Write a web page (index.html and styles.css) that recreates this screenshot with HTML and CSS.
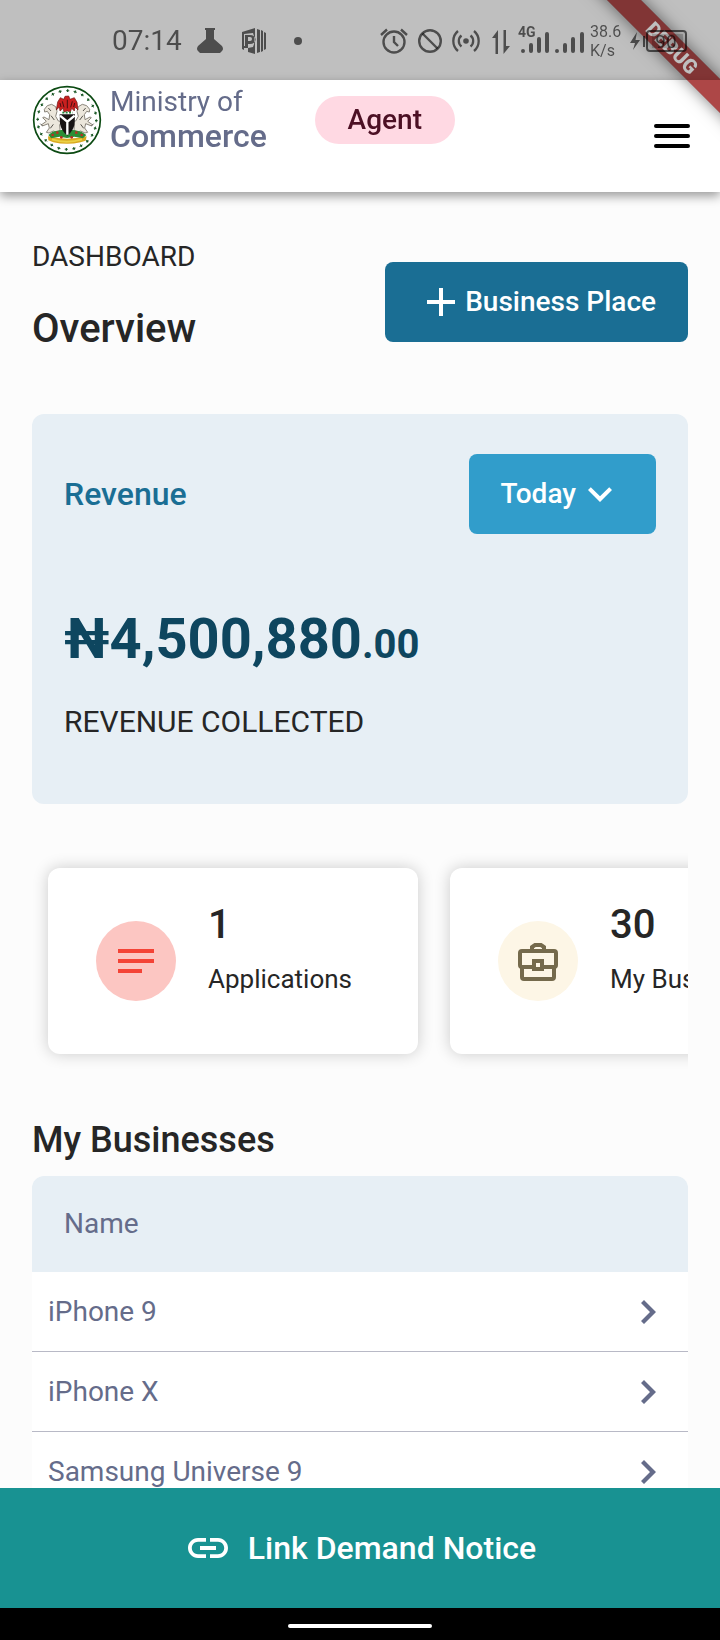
FILE: index.html
```html
<!DOCTYPE html>
<html lang="en">
<head>
<meta charset="utf-8">
<meta name="viewport" content="width=device-width, initial-scale=1">
<title>Ministry of Commerce – Dashboard</title>
<link rel="stylesheet" href="styles.css">
</head>
<body>
<div class="debug" aria-hidden="true"><span class="debug-band">DEBUG</span></div>

<div class="status">
  <span class="status-time">07:14</span>
  <svg class="status-icon" viewBox="0 0 28 28" aria-hidden="true"><path d="M9 1h10v2h-1v9l8 7q2 3 0 5l-2 2H4l-2-2q-2-2 0-5l8-7V3H9z"/></svg>
  <svg class="status-icon status-app" viewBox="0 0 28 28" aria-hidden="true"><path fill-rule="evenodd" d="M2 5L15 1v26L8 25v-4H4v2L2 22zM4 7v12h1V8h5a5 4 0 0 1 0 9H8v4l5-1q3-7 0-14zM8 10v4h2a2 2 0 0 0 0-4z"/><path d="M17 2l3 1v22l-3 1zM21 3l2 1v20l-2 1zM24 5l2 1v16l-2 1z"/></svg>
  <svg class="status-icon status-dot" viewBox="0 0 28 28" aria-hidden="true"><circle cx="14" cy="14" r="4"/></svg>

  <div class="status-right">
    <div class="status-icons">
      <svg class="status-icon" viewBox="0 0 28 28" aria-hidden="true"><g fill="none" stroke="currentColor" stroke-width="2.400"><circle cx="14" cy="15" r="10.500"/><path d="M14 9v6l4 4M1 8l6-5.500M27 8l-6-5.500"/></g></svg>
      <svg class="status-icon" viewBox="0 0 28 28" aria-hidden="true"><g fill="none" stroke="currentColor" stroke-width="2.400"><circle cx="14" cy="14" r="10.800"/><path d="M6.500 6.500l15 15"/></g></svg>
      <svg class="status-icon" viewBox="0 0 28 28" aria-hidden="true"><circle cx="14" cy="14" r="2.800"/><g fill="none" stroke="currentColor" stroke-width="2.300"><path d="M9.500 8.500a7 7 0 0 0 0 11M18.500 8.500a7 7 0 0 1 0 11M6 4a13 13 0 0 0 0 20M22 4a13 13 0 0 1 0 20"/></g></svg>
      <svg class="status-icon" viewBox="0 0 28 28" aria-hidden="true"><path d="M10 3v24H7.500V11H4zM15.500 3H18v16h4l-6.500 8z"/></svg>
    </div>
    <div class="status-signal">
      <svg viewBox="0 0 36 36" aria-hidden="true"><text class="signal-tag" x="0" y="14">4G</text><g stroke="currentColor" stroke-width="4" stroke-linecap="round"><path d="M5 27.900v.1M13 22v6M21 16v12M29 11v17"/></g></svg>
      <svg viewBox="0 0 36 36" aria-hidden="true"><g stroke="currentColor" stroke-width="4" stroke-linecap="round"><path d="M3 27.900v.1M11 22v6M19 16v12M28 11v17"/></g></svg>
    </div>
    <span class="status-speed">38.6<br>K/s</span>
    <svg class="status-battery" viewBox="0 0 60 28" aria-hidden="true"><path d="M9 5L2 16h5L5 23l7-10H7.500zM15 9h2v11h-2z"/><rect x="19" y="4" width="39" height="20" rx="3" fill="none" stroke="currentColor" stroke-width="2"/><rect x="24" y="7" width="31" height="14" opacity=".3"/><text class="battery-level" x="38" y="21" text-anchor="middle">90</text></svg>
  </div>
</div>

<header class="header">
  <div class="brand">
    <svg class="crest" viewBox="0 0 210 210" role="img" aria-label="Coat of arms">
      <circle cx="105" cy="105" r="100" fill="#fff" stroke="#0b4a12" stroke-width="5"/>
      <circle cx="105" cy="105" r="88" fill="none" stroke="#1d5a28" stroke-width="8" stroke-dasharray="4 19"/>
      <circle cx="105" cy="105" r="88" fill="none" stroke="#1d5a28" stroke-width="3" stroke-dasharray="10 13" stroke-dashoffset="3"/>
      <g fill="#ece7dc" stroke="#8b867c" stroke-width="3">
        <path id="horse" d="M78 143l-14-5-13 6-8-2 9-13-3-13-18 7-2-4 14-10-11-11 4-2 15 8 2-15-7-10-8 2-1-8 9-11 13-4 12 7 4 14-4 15 8 14 13 2-9 9 1 14z"/>
        <use href="#horse" transform="translate(210 0) scale(-1 1)"/>
      </g>
      <g fill="none" stroke="#55524c" stroke-width="3"><path d="M49 69l8 9M57 92l10 13M31 122l-6-6M55 130l9-12M161 69l-8 9M153 92l-10 13M179 122l6-6M155 130l-9-12"/></g>
      <path fill="#d9a91f" d="M48 154q57 14 116 0l-3 13-15 5q-40 9-82 0l-15-6z"/>
      <path fill="#2c8e35" d="M49 150l13-10 20-4 23-3 24 3 19 4 15 10-10 10-26-5-22 4-22-4-25 5z"/>
      <path fill="none" stroke="#ead044" stroke-width="6" d="M60 163q44 14 90 0"/>
      <g fill="#bd2d22"><circle cx="62" cy="150" r="4"/><circle cx="76" cy="143" r="4"/><circle cx="88" cy="157" r="4"/><circle cx="119" cy="157" r="4"/><circle cx="133" cy="143" r="4"/><circle cx="149" cy="150" r="4"/></g>
      <path fill="#181414" d="M83 88h46l-1 28q-4 22-22 36-18-14-22-36z"/>
      <path fill="none" stroke="#fff" stroke-width="7" d="M84 92l22 18 22-18M106 109v40"/>
      <path fill="#c9201f" stroke="#6d1512" stroke-width="2" d="M99 34l11-1 4 10 13-5 8 14 3 23-9-9-2 12-8-8-4 11-9-3-10 3-3-11-9 8-2-12-9 9 4-24 8-13 10 5z"/>
      <path fill="none" stroke="#4a1010" stroke-width="3" d="M91 49l5 18M121 49l-5 18M106 44v26M84 54l3 12M128 54l-3 12"/>
      <path fill="none" stroke="#22883a" stroke-width="5" stroke-dasharray="6 4" d="M91 83h31"/>
    </svg>
    <div class="brand-name"><span class="brand-top">Ministry of</span><strong class="brand-main">Commerce</strong></div>
    <span class="role">Agent</span>
  </div>
  <button class="menu" type="button" aria-label="Menu"><svg class="icon" viewBox="0 0 48 48" aria-hidden="true"><path stroke="currentColor" stroke-width="4" stroke-linecap="round" d="M8 14h32M8 24h32M8 34h32"/></svg></button>
</header>

<main class="main">
  <section class="intro">
    <div class="intro-titles"><p class="eyebrow">DASHBOARD</p><h1 class="page-title">Overview</h1></div>
    <button class="btn btn-primary" type="button"><svg class="icon" viewBox="0 0 48 48" aria-hidden="true"><path d="M22 10h4v12h12v4H26v12h-4V26H10v-4h12z"/></svg>Business Place</button>
  </section>

  <section class="revenue">
    <div class="revenue-head">
      <h2 class="revenue-title">Revenue</h2>
      <button class="btn btn-light" type="button" aria-haspopup="listbox">Today<svg class="icon" viewBox="0 0 48 48" aria-hidden="true"><path d="M33.200 17.200L24 26.300l-9.200-9.100L12 20l12 12 12-12z"/></svg></button>
    </div>
    <p class="amount">₦4,500,880<span class="amount-minor">.00</span></p>
    <p class="revenue-note">REVENUE COLLECTED</p>
  </section>

  <section class="stats" aria-label="Statistics">
    <article class="stat">
      <span class="stat-badge stat-badge-red"><svg class="icon" viewBox="0 0 48 48" aria-hidden="true"><path d="M6 12h36v4H6zM6 22h36v4H6zM6 32h24v4H6z"/></svg></span>
      <div class="stat-text"><strong class="stat-value">1</strong><span class="stat-label">Applications</span></div>
    </article>
    <article class="stat">
      <span class="stat-badge stat-badge-sand"><svg class="icon" viewBox="0 0 48 48" aria-hidden="true"><g fill="none" stroke="currentColor" stroke-width="4"><path d="M18 14v-4l3-2h6l3 2v4M20 30H8q-2 0-2-2V16q0-2 2-2h32q2 0 2 2v12q0 2-2 2H28M8 30v10q0 2 2 2h28q2 0 2-2V30"/><path d="M20 24h8v8h-8z"/></g></svg></span>
      <div class="stat-text"><strong class="stat-value">30</strong><span class="stat-label">My Businesses</span></div>
    </article>
  </section>

  <section class="businesses">
    <h2 class="section-title">My Businesses</h2>
    <table class="table">
      <thead><tr><th colspan="2" scope="col">Name</th></tr></thead>
      <tbody>
        <tr><td>iPhone 9</td><td class="cell-go"><button class="go" type="button" aria-label="Open iPhone 9"><svg class="icon" viewBox="0 0 48 48" aria-hidden="true"><path d="M20 12l-3 3 9 9-9 9 3 3 12-12z"/></svg></button></td></tr>
        <tr><td>iPhone X</td><td class="cell-go"><button class="go" type="button" aria-label="Open iPhone X"><svg class="icon" viewBox="0 0 48 48" aria-hidden="true"><path d="M20 12l-3 3 9 9-9 9 3 3 12-12z"/></svg></button></td></tr>
        <tr><td>Samsung Universe 9</td><td class="cell-go"><button class="go" type="button" aria-label="Open Samsung Universe 9"><svg class="icon" viewBox="0 0 48 48" aria-hidden="true"><path d="M20 12l-3 3 9 9-9 9 3 3 12-12z"/></svg></button></td></tr>
      </tbody>
    </table>
  </section>
</main>

<button class="link-bar" type="button"><svg class="icon" viewBox="0 0 24 24" aria-hidden="true"><path d="M3.900 12c0-1.710 1.390-3.100 3.100-3.100h4V7H7c-2.760 0-5 2.240-5 5s2.240 5 5 5h4v-1.900H7c-1.710 0-3.100-1.390-3.100-3.100zM8 13h8v-2H8v2zm9-6h-4v1.900h4c1.710 0 3.100 1.390 3.100 3.100s-1.390 3.100-3.100 3.100h-4V17h4c2.760 0 5-2.240 5-5s-2.240-5-5-5z"/></svg>Link Demand Notice</button>
<div class="home-bar"><span class="home-handle"></span></div>
</body>
</html>
```
FILE: styles.css
```css
* {
  box-sizing: border-box;
}

body {
  position: relative;
  display: flex;
  flex-direction: column;
  height: 100vh;
  margin: 0;
  overflow: hidden;
  background: #fff;
  color: #262626;
  font-family: Roboto, "Liberation Sans", sans-serif;
  font-size: 28px;
  line-height: 32px;
}

h1, h2, p {
  margin: 0;
}

button {
  padding: 0;
  border: 0;
  background: none;
  color: inherit;
  font: inherit;
  cursor: pointer;
}

svg {
  display: block;
  flex: none;
  fill: currentColor;
}

.icon {
  width: 48px;
  height: 48px;
}

/* Corner ribbon, laid over the page but under the system bar */
.debug {
  position: absolute;
  top: 0;
  right: 0;
  z-index: 3;
  width: 160px;
  height: 160px;
  overflow: hidden;
  pointer-events: none;
}

.debug-band {
  position: absolute;
  top: 36px;
  right: -72px;
  width: 240px;
  height: 24px;
  background: rgba(145, 10, 10, 0.75);
  box-shadow: 0 0 16px rgba(0, 0, 0, 0.5);
  color: #fff;
  font-size: 20px;
  font-weight: 900;
  line-height: 24px;
  text-align: center;
  transform: rotate(45deg);
}

/* System status bar */
.status {
  position: relative;
  z-index: 4;
  display: flex;
  flex: none;
  align-items: center;
  height: 80px;
  padding: 2px 32px 0 112px;
  background: rgba(0, 0, 0, 0.25);
  color: rgba(0, 0, 0, 0.6);
}

.status-time {
  margin-right: 14px;
}

.status-icon {
  width: 28px;
  height: 28px;
}

.status-app {
  margin-left: 16px;
}

.status-dot {
  margin-left: 16px;
}

.status-right {
  display: flex;
  align-items: center;
  margin-left: auto;
}

.status-icons {
  display: flex;
  gap: 8px;
  padding-right: 2px;
}

.status-signal {
  display: flex;
}

.status-signal svg {
  width: 36px;
  height: 36px;
}

.signal-tag {
  font-size: 14px;
  font-weight: 700;
}

.status-speed {
  width: 38px;
  font-size: 16px;
  line-height: 19px;
  white-space: nowrap;
}

.status-battery {
  width: 60px;
  height: 28px;
}

.battery-level {
  font-size: 19px;
}

/* App header */
.header {
  position: relative;
  z-index: 2;
  display: flex;
  flex: none;
  justify-content: space-between;
  min-height: 112px;
  padding: 5px 24px 5px 32px;
  background: #fff;
  box-shadow: 0 4px 10px rgba(0, 0, 0, 0.4);
}

.brand {
  display: flex;
  align-items: center;
  align-self: flex-start;
}

.crest {
  width: 70px;
  height: 70px;
  margin-right: 8px;
}

.brand-name {
  display: flex;
  flex-direction: column;
  color: #656c8a;
}

.brand-main {
  font-size: 32px;
  font-weight: 500;
  line-height: 36px;
}

.role {
  min-width: 140px;
  margin-left: 48px;
  padding: 8px 32px;
  border-radius: 24px;
  background: #ffd9e3;
  color: #4c1024;
  font-weight: 500;
  text-align: center;
}

.menu {
  align-self: center;
  color: #000;
}

/* Scrolling content */
.main {
  flex: 1;
  min-height: 0;
  padding: 49px 32px 0;
  overflow-y: auto;
  scrollbar-width: none;
  background: #fcfcfc;
}

.intro {
  display: flex;
  align-items: center;
  justify-content: space-between;
}

.page-title {
  margin-top: 32px;
  font-size: 40px;
  font-weight: 500;
  line-height: 48px;
}

.btn {
  display: flex;
  align-items: center;
  min-height: 80px;
  padding: 0 32px;
  border-radius: 8px;
  color: #fff;
  font-weight: 500;
}

.btn-primary {
  margin-top: 10px;
  background: #1a6e94;
}

.btn-light {
  background: #319dcb;
}

.revenue {
  margin-top: 61px;
  padding: 40px 32px 64px;
  border-radius: 12px;
  background: #e7eff5;
}

.revenue-head {
  display: flex;
  align-items: center;
  justify-content: space-between;
}

.revenue-title {
  color: #1a6e94;
  font-size: 32px;
  font-weight: 500;
}

.amount {
  margin-top: 73px;
  color: #0e465f;
  font-size: 56px;
  font-weight: 700;
  line-height: 64px;
}

.amount-minor {
  font-size: 40px;
}

.revenue-note {
  margin-top: 27px;
  font-size: 30px;
  line-height: 36px;
}

.stats {
  display: flex;
  gap: 32px;
  margin-top: 32px;
  padding: 32px 16px;
  overflow-x: auto;
  scrollbar-width: none;
}

.stat {
  display: flex;
  flex: 0 0 370px;
  gap: 32px;
  align-items: center;
  min-height: 186px;
  padding: 32px 48px;
  border-radius: 12px;
  background: #fff;
  box-shadow: 0 0 16px rgba(0, 0, 0, 0.2);
}

.stat-badge {
  display: grid;
  flex: none;
  place-items: center;
  width: 80px;
  height: 80px;
  border-radius: 50%;
}

.stat-badge-red {
  background: #fcc6c2;
  color: #f44336;
}

.stat-badge-sand {
  background: #fdf6e6;
  color: #756a4c;
}

.stat-text {
  display: flex;
  flex-direction: column;
  gap: 14px;
  margin-bottom: 26px;
  white-space: nowrap;
}

.stat-value {
  font-size: 40px;
  font-weight: 500;
  line-height: 48px;
}

.stat-label {
  font-size: 26px;
}

.section-title {
  margin: 32px 0 14px;
  font-size: 36px;
  font-weight: 500;
  line-height: 44px;
}

.table {
  width: 100%;
  border-collapse: separate;
  border-spacing: 0;
  background: #fff;
  border-radius: 12px 12px 0 0;
  color: #656c8a;
  text-align: left;
}

.table th {
  height: 96px;
  padding: 0 32px;
  border-radius: 12px 12px 0 0;
  background: #e7eff5;
  font-weight: 400;
}

.table td {
  height: 80px;
  padding: 0 16px;
  border-bottom: 1px solid #b8b9c6;
}

.cell-go {
  width: 80px;
}

.go {
  display: block;
}

/* Bottom action and system navigation */
.link-bar {
  display: flex;
  flex: none;
  gap: 16px;
  align-items: center;
  justify-content: center;
  min-height: 120px;
  background: #189292;
  color: #fff;
  font-size: 32px;
  font-weight: 500;
}

.home-bar {
  display: flex;
  flex: none;
  justify-content: center;
  height: 32px;
  padding-top: 16px;
  background: #000;
}

.home-handle {
  width: 144px;
  height: 4px;
  border-radius: 2px;
  background: #fff;
}
```
